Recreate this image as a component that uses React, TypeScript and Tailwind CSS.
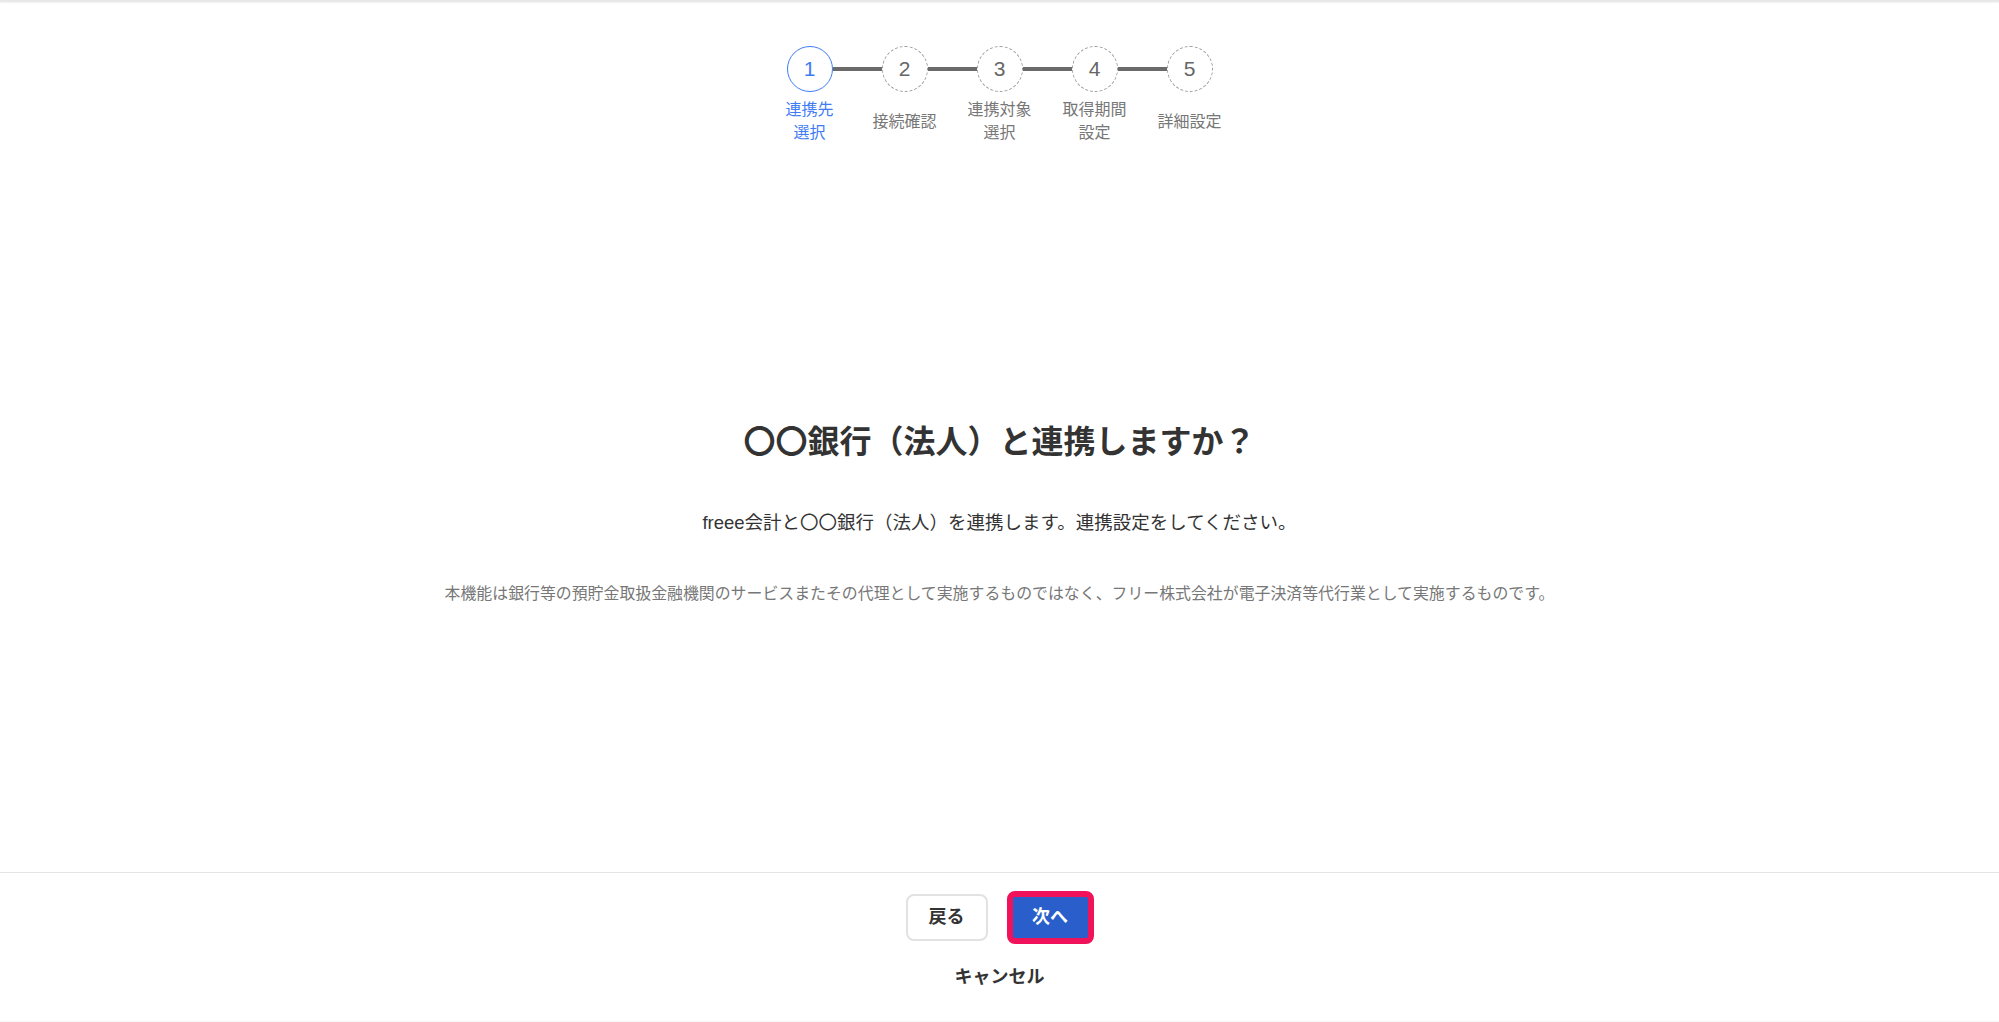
import React from "react";

const FONT = { fontFamily: "'Liberation Sans','Noto Sans CJK JP',sans-serif" };

const steps: { n: number; label: React.ReactNode; active?: boolean }[] = [
  { n: 1, label: <>連携先<br />選択</>, active: true },
  { n: 2, label: <>接続確認</> },
  { n: 3, label: <>連携対象<br />選択</> },
  { n: 4, label: <>取得期間<br />設定</> },
  { n: 5, label: <>詳細設定</> },
];

export default function App() {
  return (
    <div className="h-[1022px] w-full flex flex-col bg-white text-[#333]" style={FONT}>
      <div className="h-[2px] bg-[#e8e8e8] shadow-[0_1px_2px_rgba(0,0,0,0.06)]" />
      <div className="flex flex-col items-center pt-[44px]">
        <div className="flex items-center">
          {steps.map((s, i) => (
            <React.Fragment key={s.n}>
              {i > 0 && <div className="w-[49px] h-[4px] bg-[#6a6a6a]" />}
              <div
                className={
                  s.active
                    ? "w-[46px] h-[46px] rounded-full border-[1.5px] border-[#3f7cf4] flex items-center justify-center text-[21px] text-[#3f7cf4]"
                    : "w-[46px] h-[46px] rounded-full border-[1.5px] border-dashed border-[#9a9a9a] flex items-center justify-center text-[21px] text-[#666]"
                }
              >
                {s.n}
              </div>
            </React.Fragment>
          ))}
        </div>
        <div className="flex mt-[6px] h-[46px] items-center">
          {steps.map((s) => (
            <div
              key={s.n}
              className={
                s.active
                  ? "w-[95px] text-center text-[16px] leading-[23px] text-[#3f7cf4]"
                  : "w-[95px] text-center text-[16px] leading-[23px] text-[#777]"
              }
            >
              {s.label}
            </div>
          ))}
        </div>
      </div>
      <div className="flex-1 flex flex-col items-center">
        <h1 className="mt-[274px] text-[32px] leading-[48px] font-bold text-[#333]">
          〇〇銀行（法人）と連携しますか？
        </h1>
        <p className="mt-[44px] text-[18.5px] leading-[26px] text-[#333]">
          freee会計と〇〇銀行（法人）を連携します。連携設定をしてください。
        </p>
        <p className="mt-[47px] text-[15.9px] leading-[22px] text-[#777]">
          本機能は銀行等の預貯金取扱金融機関のサービスまたその代理として実施するものではなく、フリー株式会社が電子決済等代行業として実施するものです。
        </p>
      </div>
      <div className="h-[150px] border-t border-b border-t-[#e4e4e4] border-b-[#f7f7f7] flex flex-col items-center">
        <div className="mt-[18px] flex items-center gap-[19px]">
          <button className="w-[82px] h-[47px] rounded-[8px] border-2 border-[#e2e2e2] bg-white text-[18px] font-bold text-[#333] flex items-center justify-center">
            戻る
          </button>
          <div className="w-[87px] h-[53px] rounded-[8px] border-[6px] border-[#f0125a] bg-[#2a5fcb] flex items-center justify-center">
            <span className="text-[18px] font-bold text-white">次へ</span>
          </div>
        </div>
        <div className="mt-[21px] text-[18px] leading-[24px] font-bold text-[#333]">キャンセル</div>
      </div>
    </div>
  );
}
